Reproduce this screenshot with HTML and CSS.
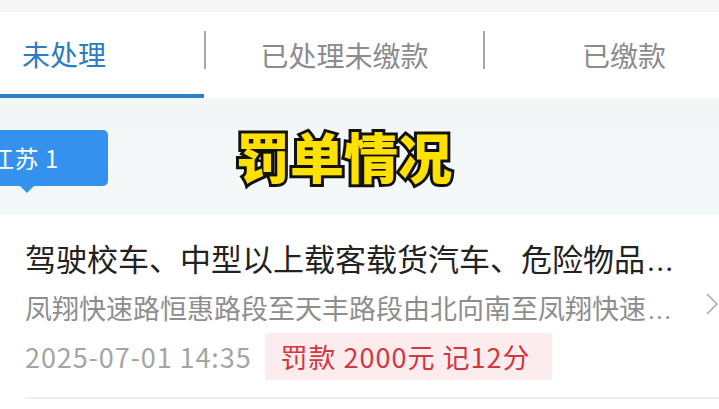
FILE: index.html
```html
<!DOCTYPE html>
<html lang="zh">
<head>
<meta charset="utf-8">
<link rel="stylesheet" href="styles.css">
</head>
<body>
<div class="page">
  <div class="topbar"></div>
  <div class="tabs">
    <div class="tab tab-active">未处理</div>
    <div class="sep"></div>
    <div class="tab tab-mid">已处理未缴款</div>
    <div class="sep"></div>
    <div class="tab tab-last">已缴款</div>
  </div>
  <div class="region">
    <div class="tag">江苏 1</div>
    <div class="caption">罚单情况</div>
  </div>
  <div class="card">
    <div class="item">
      <div class="item-body">
        <div class="title">驾驶校车、中型以上载客载货汽车、危险物品<span class="dots">...</span></div>
        <div class="addr">凤翔快速路恒惠路段至天丰路段由北向南至凤翔快速<span class="dots">...</span></div>
        <div class="meta">
          <span class="date">2025-07-01 14:35</span>
          <span class="fine">罚款 2000元&nbsp;记12分</span>
        </div>
      </div>
      <svg class="chev" width="14" height="24" viewBox="0 0 14 24"><path d="M2 2 L12 12 L2 22" fill="none" stroke="#b4b4b4" stroke-width="1.8"/></svg>
    </div>
    <div class="divider"></div>
  </div>
</div>
</body>
</html>
```

FILE: styles.css
```css
* { box-sizing: border-box; }
html, body { margin: 0; padding: 0; }
body {
  width: 719px;
  height: 409px;
  overflow: hidden;
  background: #f4f6f7;
  font-family: "Noto Sans CJK SC", "Noto Sans", sans-serif;
}
.page { width: 719px; }
.topbar { height: 12px; background: #f5f6f7; border-bottom: 1px solid #eeeff0; }
.tabs {
  height: 86px;
  background: #ffffff;
  display: flex;
  align-items: center;
}
.tab {
  font-size: 28px;
  color: #8c8c8c;
  height: 86px;
  display: flex;
  align-items: center;
}
.tab-active {
  width: 204px;
  padding-left: 22px;
  color: #2b7cc3;
  border-bottom: 4px solid #2f7fc5;
  padding-top: 2px;
}
.tab-mid { width: 277px; justify-content: center; }
.tab-last { flex: 1; padding-left: 97px; }
.sep { width: 2px; height: 38px; background: #a6a6a6; margin-top: -10px; }
.region {
  height: 117px;
  position: relative;
  background: linear-gradient(#f3f6f7, #f5f8f8);
  padding-top: 32px;
}
.tag {
  position: relative;
  display: inline-block;
  margin-left: -10px;
  width: 118px;
  height: 56px;
  line-height: 56px;
  background: #3591ee;
  color: #ffffff;
  font-size: 24px;
  letter-spacing: 0.5px;
  border-radius: 0 5px 5px 0;
}
.tag::after {
  content: "";
  position: absolute;
  left: 30px;
  bottom: -7px;
  border-left: 7px solid transparent;
  border-right: 7px solid transparent;
  border-top: 7px solid #3591ee;
}
.caption {
  position: absolute;
  left: 236px;
  top: 18px;
  font-size: 54px;
  font-weight: 900;
  color: #ffe100;
  -webkit-text-stroke: 6px #111111;
  paint-order: stroke fill;
  line-height: 80px;
}
.card { background: #ffffff; height: 194px; padding-top: 22px; }
.item { display: flex; align-items: center; padding-left: 25px; }
.item-body { width: 670px; }
.title {
  font-size: 31px;
  color: #222222;
  white-space: nowrap;
  line-height: 42px;
}
.addr {
  font-size: 27px;
  color: #8e8e8e;
  white-space: nowrap;
  line-height: 38px;
  margin-top: 7px;
}
.dots { font-family: "Roboto", sans-serif; letter-spacing: 1px; margin-left: 2px; }
.meta { display: flex; align-items: center; margin-top: 4px; }
.date { font-size: 27px; color: #a4a4a4; letter-spacing: 0.9px; }
.fine {
  margin-left: 13px;
  background: #fdeced;
  color: #d3363f;
  font-size: 27px;
  letter-spacing: 1px;
  height: 47px;
  line-height: 47px;
  padding: 0 21px 0 16px;
  border-radius: 2px;
}
.chev { margin-left: 12px; margin-top: -10px; }
.divider { margin: 17px 0 0 25px; height: 2px; background: #eeeeee; }
```
